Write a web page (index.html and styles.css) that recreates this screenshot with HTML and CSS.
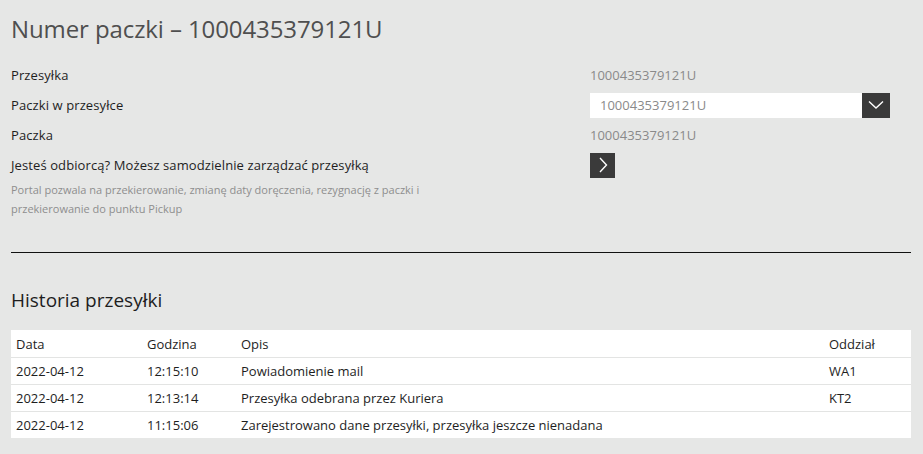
FILE: index.html
```html
<!DOCTYPE html>
<html lang="pl">
<head>
<meta charset="utf-8">
<title>Numer paczki</title>
<link rel="stylesheet" href="styles.css">
</head>
<body>
<main class="page">
  <h1 class="title">Numer paczki – 1000435379121U</h1>
  <div class="details">
    <div class="row">
      <div class="label">Przesyłka</div>
      <div class="value">1000435379121U</div>
    </div>
    <div class="row">
      <div class="label">Paczki w przesyłce</div>
      <div class="value">
        <div class="select">
          <span class="select-text">1000435379121U</span>
          <span class="select-btn">
            <svg width="16" height="10" viewBox="0 0 16 10"><path d="M1 1.5 L8 8 L15 1.5" fill="none" stroke="#fff" stroke-width="1.4"/></svg>
          </span>
        </div>
      </div>
    </div>
    <div class="row">
      <div class="label">Paczka</div>
      <div class="value">1000435379121U</div>
    </div>
    <div class="row">
      <div class="label">Jesteś odbiorcą? Możesz samodzielnie zarządzać przesyłką</div>
      <div class="value">
        <span class="go-btn">
          <svg width="10" height="16" viewBox="0 0 10 16"><path d="M2 1 L8.5 8 L2 15" fill="none" stroke="#fff" stroke-width="1.4"/></svg>
        </span>
      </div>
    </div>
    <p class="note">Portal pozwala na przekierowanie, zmianę daty doręczenia, rezygnację z paczki i przekierowanie do punktu Pickup</p>
  </div>
  <hr class="divider">
  <h2 class="subtitle">Historia przesyłki</h2>
  <table class="history">
    <thead>
      <tr><th class="c-date">Data</th><th class="c-time">Godzina</th><th class="c-desc">Opis</th><th class="c-branch">Oddział</th></tr>
    </thead>
    <tbody>
      <tr><td>2022-04-12</td><td>12:15:10</td><td>Powiadomienie mail</td><td>WA1</td></tr>
      <tr><td>2022-04-12</td><td>12:13:14</td><td>Przesyłka odebrana przez Kuriera</td><td>KT2</td></tr>
      <tr><td>2022-04-12</td><td>11:15:06</td><td>Zarejestrowano dane przesyłki, przesyłka jeszcze nienadana</td><td></td></tr>
    </tbody>
  </table>
</main>
</body>
</html>
```
FILE: styles.css
```css
html, body {
  margin: 0;
  padding: 0;
  background: #e6e7e6;
}
body {
  font-family: "Open Sans", "Liberation Sans", sans-serif;
  color: #1e1e1e;
}
.page {
  padding: 11px 12px 0 11px;
}
.title {
  margin: 0;
  font-size: 24px;
  font-weight: 400;
  color: #4f4f4f;
  line-height: 36px;
  letter-spacing: -0.1px;
}
.details {
  margin-top: 13px;
}
.row {
  display: flex;
  align-items: center;
  height: 30px;
}
.label {
  width: 579px;
  font-size: 13px;
  color: #1e1e1e;
  letter-spacing: 0.1px;
}
.value {
  font-size: 13px;
  color: #8a8a8a;
  flex: 1;
}
.select {
  display: flex;
  width: 300px;
  height: 25px;
  background: #fff;
}
.select-text {
  flex: 1;
  display: flex;
  align-items: center;
  padding-left: 10px;
  color: #8a8a8a;
}
.select-btn {
  width: 28px;
  display: flex;
  align-items: center;
  justify-content: center;
  background: #3a3a3a;
}
.go-btn {
  width: 25px;
  height: 25px;
  display: flex;
  align-items: center;
  justify-content: center;
  background: #3a3a3a;
}
.note {
  margin: 0;
  width: 440px;
  font-size: 11px;
  line-height: 19px;
  color: #8e8e8e;
}
.divider {
  margin: 34px 0 0;
  border: 0;
  border-top: 1px solid #111;
  height: 0;
}
.subtitle {
  margin: 35px 0 0;
  font-size: 19px;
  font-weight: 400;
  line-height: 24px;
  color: #1e1e1e;
}
.history {
  margin-top: 18px;
  width: 900px;
  border-collapse: collapse;
  background: #fff;
  font-size: 13px;
}
.history th, .history td {
  text-align: left;
  font-weight: 400;
  height: 26px;
  padding: 0 5px;
  color: #1e1e1e;
  border-top: 1px solid #e3e4e3;
}
.history thead th {
  border-top: 0;
  height: 27px;
}
.c-date { width: 121px; }
.c-time { width: 84px; }
.c-branch { width: 72px; }
.history th.c-branch { padding-right: 10px; }
```
